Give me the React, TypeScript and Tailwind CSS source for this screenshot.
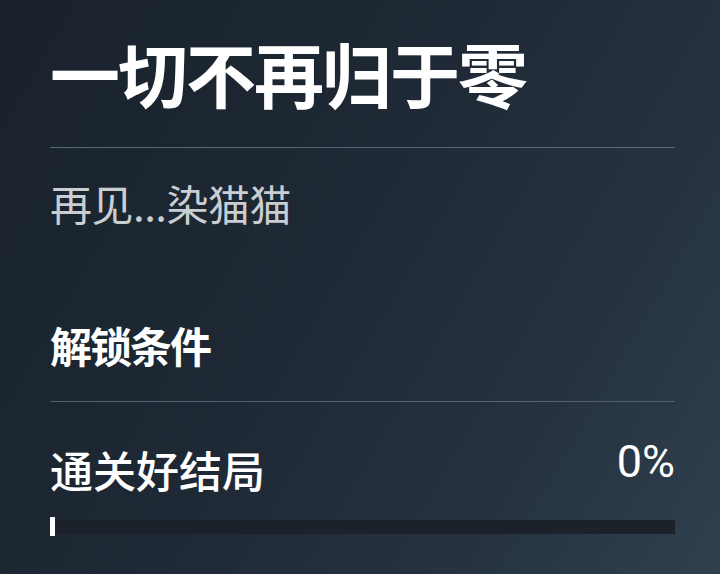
export default function App() {
  const progress = 0;

  return (
    <div className="w-[720px] h-[574px] overflow-hidden bg-[linear-gradient(120deg,#19222c_0%,#1e2935_45%,#26333f_75%,#30404f_100%)] font-['Noto_Sans_CJK_SC','Noto_Sans',sans-serif] text-white">
      <div className="flex flex-col pl-[50px] pr-[45px] pt-[38px]">
        {/* Achievement title */}
        <h1 className="text-[70px] leading-none font-bold tracking-[-2px]">一切不再归于零</h1>
        <div className="mt-[39px] h-px bg-[#5b6774]" />

        <p className="mt-[34px] text-[42px] leading-none text-[#c9ced3] tracking-[-0.5px]">再见...染猫猫</p>

        {/* Unlock conditions */}
        <h2 className="mt-[100px] text-[42px] leading-none font-bold tracking-[-2px]">解锁条件</h2>
        <div className="mt-[35px] h-px bg-[#55616e]" />

        <div className="mt-[46px] flex items-start justify-between">
          <span className="text-[43px] leading-none font-medium">通关好结局</span>
          <span className="-mt-[9px] font-['Roboto',sans-serif] text-[45px] leading-none">{progress}%</span>
        </div>

        <div className="mt-[26px] relative h-[19px] flex items-center">
          <div className="h-[14px] w-full bg-[#1b222a]" />
          <div
            className="absolute left-0 top-0 h-[19px] min-w-[5px] bg-white"
            style={{ width: `${progress}%` }}
          />
        </div>
      </div>
    </div>
  );
}
